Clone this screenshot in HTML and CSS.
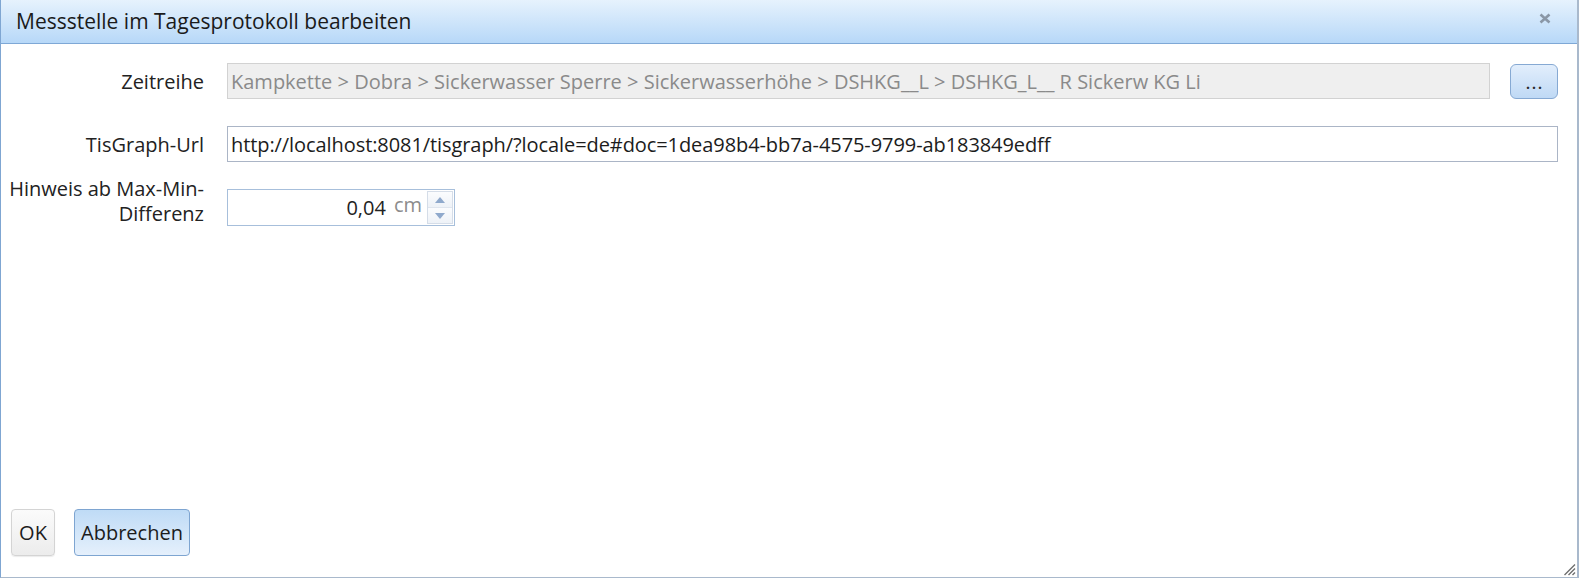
FILE: index.html
```html
<!DOCTYPE html>
<html lang="de">
<head>
<meta charset="utf-8">
<title>Messstelle im Tagesprotokoll bearbeiten</title>
<link rel="stylesheet" href="styles.css">
</head>
<body>
<div class="dialog">
  <div class="titlebar">
    <span class="title">Messstelle im Tagesprotokoll bearbeiten</span>
    <span class="close">
      <svg width="12" height="11" viewBox="0 0 12 11"><path d="M1.5 1.5 L10.5 9.5 M10.5 1.5 L1.5 9.5" stroke="#8a97a6" stroke-width="2.6" stroke-linecap="butt"/></svg>
    </span>
  </div>
  <div class="content">
    <div class="form">
      <label class="label">Zeitreihe</label>
      <div class="field field-row">
        <div class="input input-disabled">Kampkette &gt; Dobra &gt; Sickerwasser Sperre &gt; Sickerwasserhöhe &gt; DSHKG__L &gt; DSHKG_L__ R Sickerw KG Li</div>
        <button class="btn-dots">...</button>
      </div>
      <label class="label">TisGraph-Url</label>
      <div class="field">
        <div class="input input-url">http://localhost:8081/tisgraph/?locale=de#doc=1dea98b4-bb7a-4575-9799-ab183849edff</div>
      </div>
      <label class="label label-two">Hinweis ab Max-Min-<br>Differenz</label>
      <div class="field">
        <div class="spinner">
          <span class="spin-value">0,04</span>
          <span class="spin-unit">cm</span>
          <span class="spin-buttons">
            <span class="spin-btn">
              <svg width="10" height="6" viewBox="0 0 10 6"><path d="M0 6 L5 0 L10 6 Z" fill="#8fa9cc"/></svg>
            </span>
            <span class="spin-btn">
              <svg width="10" height="6" viewBox="0 0 10 6"><path d="M0 0 L5 6 L10 0 Z" fill="#8fa9cc"/></svg>
            </span>
          </span>
        </div>
      </div>
    </div>
    <div class="footer">
      <button class="btn btn-plain">OK</button>
      <button class="btn btn-blue">Abbrechen</button>
    </div>
  </div>
  <svg class="grip" width="14" height="14" viewBox="0 0 14 14">
    <path d="M13 2.5 L2.5 13 M13 6.5 L6.5 13 M13 10.5 L10.5 13" stroke="#6f6f6f" stroke-width="1.4"/>
  </svg>
</div>
</body>
</html>
```

FILE: styles.css
```css
* { box-sizing: border-box; }
html, body {
  margin: 0;
  padding: 0;
  background: #ffffff;
}
body {
  font-family: "Open Sans", "Noto Sans", sans-serif;
  font-size: 20px;
  color: #222222;
}
.dialog {
  position: relative;
  width: 1579px;
  height: 578px;
  border-left: 1px solid #7fa6d2;
  border-right: 2px solid #a9b9cc;
  border-bottom: 1px solid #a9b9cc;
  display: flex;
  flex-direction: column;
  background: #fff;
}
.titlebar {
  height: 44px;
  flex: none;
  display: flex;
  align-items: center;
  justify-content: space-between;
  padding: 0 26px 2px 15px;
  background: linear-gradient(#e6f2fd, #b7d8f8);
  border-bottom: 1px solid #7ea8d6;
}
.title {
  font-size: 21px;
  color: #1a1a1a;
}
.close {
  display: flex;
  margin-top: -4px;
}
.content {
  flex: 1;
  display: flex;
  flex-direction: column;
  justify-content: space-between;
  padding: 19px 19px 21px 8px;
}
.form {
  display: grid;
  grid-template-columns: 195px 1fr;
  column-gap: 23px;
  row-gap: 27px;
  align-items: center;
}
.label {
  text-align: right;
  white-space: nowrap;
}
.label-two {
  line-height: 25px;
  margin-top: -14px;
}
.field-row {
  display: flex;
  align-items: center;
  gap: 20px;
}
.input {
  height: 36px;
  display: flex;
  align-items: center;
  padding: 0 3px;
  white-space: nowrap;
  overflow: hidden;
}
.input-disabled {
  flex: 1;
  background: #efefef;
  border: 1px solid #d2d2d2;
  color: #8a8a8a;
}
.input-url {
  border: 1px solid #abb5c6;
  color: #1c1c1c;
  letter-spacing: -0.08px;
}
.btn-dots {
  width: 48px;
  height: 35px;
  border: 1px solid #86a9d3;
  border-radius: 6px;
  background: linear-gradient(#e2eefc, #bfd9f5);
  font-family: inherit;
  font-size: 14px;
  font-weight: bold;
  color: #2a2a2a;
  padding: 4px 0 0;
  letter-spacing: 2px;
  text-indent: 2px;
}
.spinner {
  width: 228px;
  height: 37px;
  border: 1px solid #a7bfdb;
  display: flex;
  align-items: center;
  padding: 0 1px 0 0;
}
.spin-value {
  flex: 1;
  text-align: right;
}
.spin-unit {
  color: #8c8c8c;
  margin-left: 8px;
  margin-right: 5px;
  margin-top: -6px;
}
.spin-buttons {
  display: flex;
  flex-direction: column;
  width: 26px;
  height: 33px;
  border: 1px solid #d5dde8;
}
.spin-btn {
  flex: 1;
  display: flex;
  align-items: center;
  justify-content: center;
  background: linear-gradient(#fbfcfe, #eef2f7);
}
.spin-btn + .spin-btn {
  border-top: 1px solid #dfe5ee;
}
.footer {
  display: flex;
  gap: 19px;
  padding-left: 2px;
}
.btn {
  height: 47px;
  border-radius: 4px;
  font-family: inherit;
  font-size: 20px;
  color: #1c1c1c;
  padding: 0 4px;
}
.btn-plain {
  width: 44px;
  border: 1px solid #d4d4d4;
  background: linear-gradient(#fbfbfb, #ececec);
  box-shadow: 0 1px 1px rgba(0,0,0,0.08);
}
.btn-blue {
  width: 116px;
  border: 1px solid #7ea5d1;
  background: linear-gradient(#bfdbf6, #e5f0fc);
}
.grip {
  position: absolute;
  right: 1px;
  bottom: 1px;
}
```
